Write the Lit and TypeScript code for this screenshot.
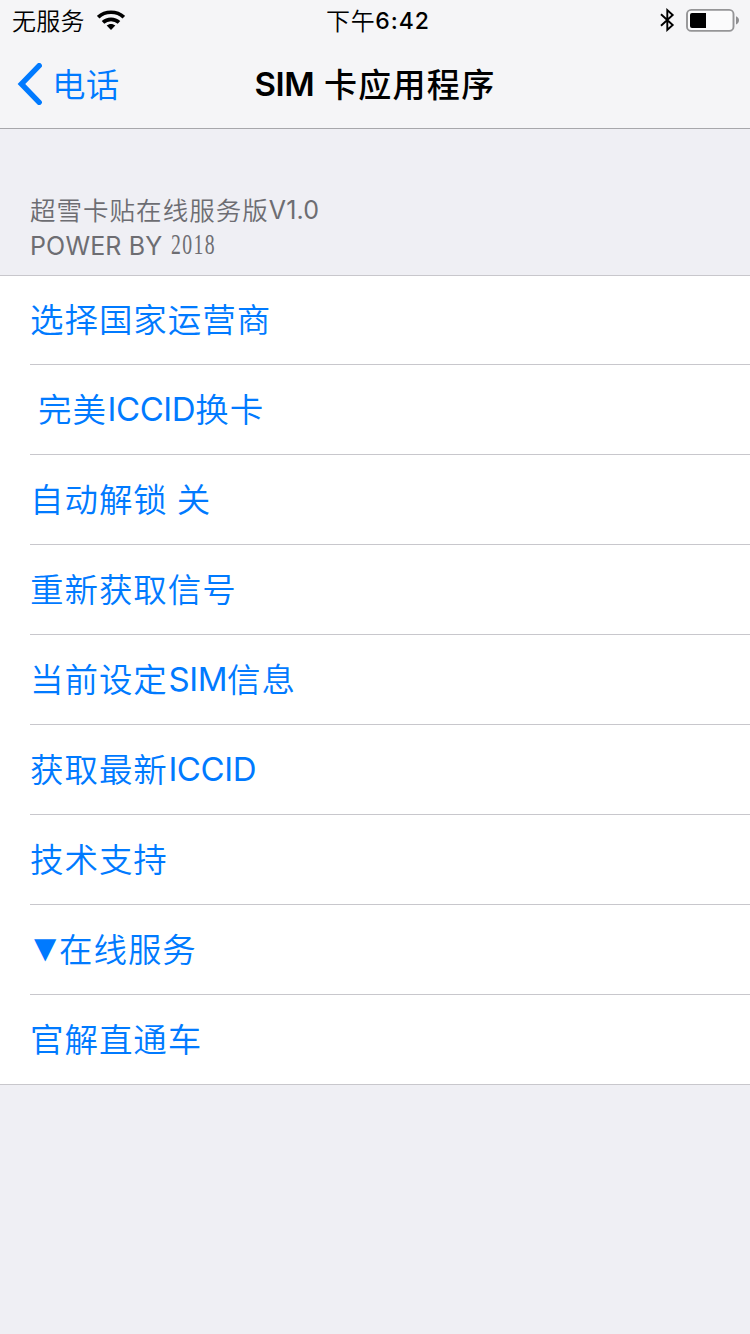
import { LitElement, html, css } from "lit";
import { customElement, property } from "lit/decorators.js";

type Run = { text: string; kind?: "latin" | "marker" | "gap" };

const rows: Run[][] = [
  [{ text: "选择国家运营商" }],
  [{ text: " ", kind: "gap" }, { text: "完美" }, { text: "ICCID", kind: "latin" }, { text: "换卡" }],
  [{ text: "自动解锁" }, { text: " ", kind: "gap" }, { text: "关" }],
  [{ text: "重新获取信号" }],
  [{ text: "当前设定" }, { text: "SIM", kind: "latin" }, { text: "信息" }],
  [{ text: "获取最新" }, { text: "ICCID", kind: "latin" }],
  [{ text: "技术支持" }],
  [{ text: "▼", kind: "marker" }, { text: "在线服务" }],
  [{ text: "官解直通车" }],
];

@customElement("status-bar")
class StatusBar extends LitElement {
  static styles = css`
    :host {
      display: grid;
      grid-template-columns: 1fr auto 1fr;
      grid-template-rows: 40px;
      height: 40px;
      align-items: center;
      color: #000;
      font: 24px/40px Inter, "Noto Sans CJK SC", sans-serif;
    }
    .left { display: flex; align-items: center; padding-left: 12px; gap: 12px; }
    .carrier { letter-spacing: 0.3px; font-weight: 350; line-height: 37px; padding-top: 3px; }
    .time { font-weight: 500; font-size: 23px; letter-spacing: 1px; display: flex; height: 38px; padding: 2px 0 0 6px; line-height: 38px; }
    .period { font-weight: 350; font-size: 24px; line-height: 40px; letter-spacing: 0.6px; }
    .right { display: flex; justify-content: flex-end; align-items: center; padding-right: 10px; gap: 11px; }
    svg { display: block; }
  `;
  render() {
    return html`
      <div class="left">
        <span class="carrier">无服务</span>
        <svg width="28" height="20" viewBox="0 0 28 20" fill="none" stroke="#000">
          <path d="M1.2 7.2C8.2 .6 19.8 .6 26.8 7.2" stroke-width="3.7" />
          <path d="M6 12.4C10.4 8.3 17.6 8.3 22 12.4" stroke-width="3.7" />
          <path d="M14 20l-4.3-4.4c2.3-2.2 6.3-2.2 8.6 0z" fill="#000" stroke="none" />
        </svg>
      </div>
      <div class="time"><span class="period">下午</span><span>6:42</span></div>
      <div class="right">
        <svg width="15" height="24" viewBox="0 0 15 24" fill="none" stroke="#000" stroke-width="1.9">
          <path d="M1 6.2L12.7 17 7.3 21.9V2.1L12.7 7 1 17.8" />
        </svg>
        <svg width="54" height="24" viewBox="0 0 54 24">
          <rect x="1" y="1.9" width="46.5" height="21" rx="4.2" fill="#fbfbfc" stroke="#959597" stroke-width="1.9" />
          <path d="M6 5H20V20H6a2 2 0 0 1-2-2V7a2 2 0 0 1 2-2z" />
          <path d="M50 8.3c4 1.4 4 6.8 0 8.2z" fill="#8e8e90" />
        </svg>
      </div>
    `;
  }
}

@customElement("nav-bar")
class NavBar extends LitElement {
  static styles = css`
    :host {
      display: grid;
      grid-template-columns: 1fr auto 1fr;
      height: 88px;
      align-items: center;
      border-bottom: 1px solid #a7a7ab;
      font: 34px/88px "Noto Sans CJK SC", sans-serif;
    }
    .back { display: flex; align-items: center; padding-left: 17px; gap: 9px; color: #007aff; }
    .label { font-size: 33.5px; letter-spacing: 0.3px; font-weight: 350; line-height: 85px; padding-bottom: 3px; }
    .title { display: flex; color: #000; font-weight: 500; font-size: 33px; letter-spacing: 1.3px; line-height: 86px; padding-bottom: 2px; }
    .latin { font-family: Inter, sans-serif; font-weight: 600; letter-spacing: -0.4px; margin-right: 9.6px; line-height: 88px; margin-bottom: -2px; }
    svg { display: block; }
  `;
  render() {
    return html`
      <div class="back">
        <svg width="26" height="42" viewBox="0 0 26 42" fill="none" stroke="#007aff" stroke-width="5.4" stroke-linecap="round" stroke-linejoin="miter">
          <path d="M22.2 2.7L4.4 21 22.2 39.3" />
        </svg>
        <span class="label">电话</span>
      </div>
      <div class="title"><span class="latin">SIM</span><span>卡应用程序</span></div>
      <div></div>
    `;
  }
}

@customElement("menu-row")
class MenuRow extends LitElement {
  @property({ attribute: false }) runs: Run[] = [];
  static styles = css`
    :host { display: block; padding-left: 30px; }
    .cell {
      display: flex;
      height: 89px;
      border-bottom: 1px solid #c8c7cc;
      color: #007aff;
      font: 350 33.5px/85px "Noto Sans CJK SC", sans-serif;
      letter-spacing: 0.95px;
      white-space: pre;
    }
    :host(.last) { padding-left: 0; }
    :host(.last) .cell { padding-left: 30px; }
    :host(.first) .cell { height: 88px; line-height: 83px; }
    .latin { font-family: Inter, sans-serif; font-weight: 400; font-size: 33px; line-height: 89px; letter-spacing: -0.4px; margin-left: 0.6px; }
    .marker { font-family: "DejaVu Sans", sans-serif; font-weight: 400; font-size: 29px; line-height: 86px; letter-spacing: 0; width: 25px; padding-left: 4px; }
    .gap { width: 8px; }
    .gap:not(:first-child) { width: 9px; }
  `;
  render() {
    return html`<div class="cell">${this.runs.map((r) => html`<span class=${r.kind ?? "han"}>${r.text}</span>`)}</div>`;
  }
}

@customElement("app-root")
class AppRoot extends LitElement {
  static styles = css`
    :host { display: block; height: 1334px; background: #efeff4; overflow: hidden; }
    .top { background: #f5f5f7; }
    .heading {
      box-sizing: border-box;
      height: 147px;
      padding: 63px 30px 0;
      border-bottom: 1px solid #c8c7cc;
      color: #6d6d72;
      font: 25px/36px Inter, "Noto Sans CJK SC", sans-serif;
    }
    .line { display: flex; height: 36px; white-space: pre; }
    .han { font-family: "Noto Sans CJK SC", sans-serif; font-weight: 350; font-size: 25.5px; letter-spacing: 1.03px; line-height: 33px; }
    .latin { letter-spacing: 0.15px; }
    .year {
      font-family: "Liberation Serif", serif;
      font-size: 29px;
      line-height: 33px;
      letter-spacing: 2.1px;
      margin-left: 9px;
      transform: scaleX(0.68);
      transform-origin: left center;
    }
    .list { background: #fff; }
  `;
  render() {
    return html`
      <div class="top"><status-bar></status-bar><nav-bar></nav-bar></div>
      <div class="heading">
        <div class="line"><span class="han">超雪卡贴在线服务版</span><span class="latin">V1.0</span></div>
        <div class="line"><span class="latin">POWER BY</span><span class="year">2018</span></div>
      </div>
      <div class="list">
        ${rows.map((runs, i) => html`<menu-row class=${i === 0 ? "first" : i === rows.length - 1 ? "last" : ""} .runs=${runs}></menu-row>`)}
      </div>
    `;
  }
}
